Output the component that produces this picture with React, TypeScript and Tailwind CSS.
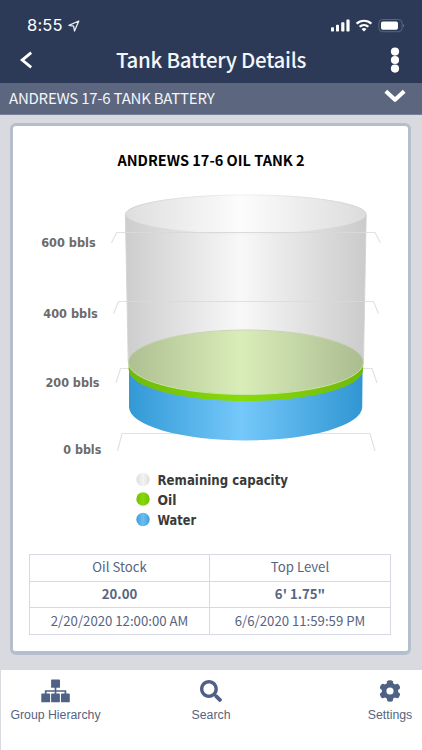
import React from 'react'
import { FaSearch } from 'react-icons/fa'

interface AxisLevel {
  label: string
  textX: number
  textWidth: number
  baseline: number
  points: string
}

const axisLevels: AxisLevel[] = [
  { label: '600 bbls', textX: 41.2, textWidth: 54.5, baseline: 246.7, points: '111.5,243 116.5,232.5 375,232.5 380.5,243' },
  { label: '400 bbls', textX: 43.3, textWidth: 54.5, baseline: 318, points: '113.5,313.5 118.5,301.5 373.5,301.5 378.5,313.5' },
  { label: '200 bbls', textX: 45.5, textWidth: 54, baseline: 387.2, points: '116,383 120.5,368.5 372,368.5 377,383' },
  { label: '0 bbls', textX: 63.3, textWidth: 38, baseline: 454, points: '117.5,451 122,433.5 370,433.5 375,451' }
]

const legendItems = [
  { label: 'Remaining capacity', fill: 'url(#legendGray)', y: 479.5, width: 130.5 },
  { label: 'Oil', fill: 'url(#legendOil)', y: 499, width: 19 },
  { label: 'Water', fill: 'url(#legendWater)', y: 519.5, width: 38.5 }
]

const readings = [
  { left: 'Oil Stock', right: 'Top Level', bold: false },
  { left: '20.00', right: '6\' 1.75"', bold: true },
  { left: '2/20/2020 12:00:00 AM', right: '6/6/2020 11:59:59 PM', bold: false }
]

const gearTeeth = [0, 60, 120, 180, 240, 300]

function StatusBar() {
  return (
    <div className="flex h-[38px] items-end justify-between pl-[27px] pr-[17px] pb-[2px]">
      <div className="flex items-center gap-[5px]">
        <span className="mb-[1px] font-[Inter,sans-serif] text-[16.5px] leading-[20px] tracking-[0.2px] text-white">8:55</span>
        <svg width="12" height="12" viewBox="0 0 12 12" fill="none" stroke="#e8ecf4" strokeWidth="1.3" strokeLinejoin="round">
          <path d="M10.8 1 L0.9 5.3 L5.6 6.1 L6.5 11 Z" />
        </svg>
      </div>
      <svg className="mb-[3px]" width="75" height="16" viewBox="0 0 75 16" fill="#fff">
        <rect x="1" y="10.2" width="3" height="4.3" rx="0.8" />
        <rect x="6" y="7.8" width="3" height="6.7" rx="0.8" />
        <rect x="11.2" y="5.2" width="3.2" height="9.3" rx="0.8" />
        <rect x="16.4" y="2.6" width="3.2" height="11.9" rx="0.8" />
        <g fill="none" stroke="#fff" strokeWidth="2.2">
          <path d="M26.6 6.6 A11 11 0 0 1 41.4 6.6" />
          <path d="M29.6 9.7 A6.6 6.6 0 0 1 38.4 9.7" />
        </g>
        <path d="M31.5 12 Q34 9.9 36.5 12 L34 14.6 Z" />
        <rect x="48.9" y="2.5" width="23.2" height="12.2" rx="3.6" fill="none" stroke="#5f6a80" strokeWidth="0.9" />
        <rect x="51" y="4.4" width="17" height="8.4" rx="1.8" />
        <path d="M73.4 7 Q75 8.6 73.4 10.2 Z" fill="#8e96a8" />
      </svg>
    </div>
  )
}

function Header() {
  return (
    <header className="h-[83px] bg-[#2c3a57]">
      <StatusBar />
      <div className="flex h-[45px] items-center justify-between pl-[19px] pr-[22px]">
        <svg width="14" height="18" viewBox="0 0 14 18" fill="none" stroke="#fff" strokeWidth="2.8" className="mb-[2px]">
          <path d="M12.2 1.6 L3.2 9.1 L12.2 16.4" />
        </svg>
        <h1 className="mb-[4px] mr-[1px] whitespace-nowrap text-[20.5px] leading-[28px] font-medium tracking-[-0.27px] text-[#f3f6fb]">
          Tank Battery Details
        </h1>
        <svg width="10" height="26" viewBox="0 0 10 26" fill="#fff" className="mb-[2px]">
          <circle cx="5" cy="4.6" r="4.1" />
          <circle cx="5" cy="13" r="4.1" />
          <circle cx="5" cy="21.6" r="4.1" />
        </svg>
      </div>
    </header>
  )
}

function TankChart() {
  return (
    <svg width="395" height="360" viewBox="13 180 395 360" className="block">
      <defs>
        <linearGradient id="wall">
          <stop offset="0" stopColor="#cdcdcd" />
          <stop offset="0.48" stopColor="#f8f8f8" />
          <stop offset="1" stopColor="#cbcbcb" />
        </linearGradient>
        <linearGradient id="lid">
          <stop offset="0" stopColor="#dedede" />
          <stop offset="0.48" stopColor="#fcfcfc" />
          <stop offset="1" stopColor="#dcdcdc" />
        </linearGradient>
        <linearGradient id="lidEdge">
          <stop offset="0" stopColor="#cccccc" />
          <stop offset="0.48" stopColor="#efefef" />
          <stop offset="1" stopColor="#cccccc" />
        </linearGradient>
        <linearGradient id="oilTop">
          <stop offset="0" stopColor="#aebf91" />
          <stop offset="0.48" stopColor="#d9edb9" />
          <stop offset="1" stopColor="#abbc90" />
        </linearGradient>
        <linearGradient id="oilSide">
          <stop offset="0" stopColor="#70b80c" />
          <stop offset="0.48" stopColor="#88dc08" />
          <stop offset="1" stopColor="#70b80c" />
        </linearGradient>
        <linearGradient id="waterSide">
          <stop offset="0" stopColor="#3299d5" />
          <stop offset="0.48" stopColor="#75c8fa" />
          <stop offset="1" stopColor="#3096d2" />
        </linearGradient>
        <linearGradient id="legendGray">
          <stop offset="0" stopColor="#dedede" />
          <stop offset="0.5" stopColor="#f4f4f4" />
          <stop offset="1" stopColor="#dedede" />
        </linearGradient>
        <linearGradient id="legendOil">
          <stop offset="0" stopColor="#74c004" />
          <stop offset="0.5" stopColor="#87d80a" />
          <stop offset="1" stopColor="#74c004" />
        </linearGradient>
        <linearGradient id="legendWater">
          <stop offset="0" stopColor="#409fdb" />
          <stop offset="0.5" stopColor="#6ebdf0" />
          <stop offset="1" stopColor="#409fdb" />
        </linearGradient>
      </defs>

      {/* Axis */}
      {axisLevels.map((level) => (
        <g key={level.label}>
          <polyline points={level.points} fill="none" stroke="#e2e2e2" strokeWidth="1.2" />
          <text
            x={level.textX}
            y={level.baseline}
            textLength={level.textWidth}
            lengthAdjust="spacingAndGlyphs"
            className="font-['DejaVu_Sans',sans-serif] text-[13px] font-bold"
            fill="#6b6b6b"
          >
            {level.label}
          </text>
        </g>
      ))}

      {/* Water, then oil, then the empty part of the tank */}
      <path d="M129 368 L129 407 A116.6 33.5 0 0 0 362.2 407 L362.6 368 Z" fill="url(#waterSide)" />
      <path d="M128.4 362 L128.7 370 A117 31 0 0 0 363 370 L363.4 362 Z" fill="url(#oilSide)" />
      <path d="M125.3 215 L128.4 364 L363.4 364 L366.2 215 Z" fill="url(#wall)" />
      <ellipse cx="245.9" cy="362.3" rx="117.5" ry="32" fill="url(#oilTop)" />
      <path d="M128.4 362 A117.5 32 0 0 1 363.4 362" fill="none" stroke="#c3d0ae" strokeWidth="0.9" />
      <path d="M128.4 362.5 A117.5 32 0 0 0 363.4 362.5" fill="none" stroke="#d3e4ba" strokeWidth="0.9" />
      <ellipse cx="245.8" cy="214.5" rx="120.4" ry="19.6" fill="url(#lid)" stroke="url(#lidEdge)" strokeWidth="0.9" />
      <path d="M125.4 215 L128.2 362 M366.2 215 L363.5 362" stroke="#d2d2d2" strokeWidth="0.9" />
      <path d="M126 232.5 H366" stroke="#d9d9d9" strokeWidth="1" />
      <path d="M127 301.5 H364.5" stroke="#d9d9d9" strokeWidth="0.8" />

      {/* Legend */}
      {legendItems.map((item) => (
        <g key={item.label}>
          <circle cx="143" cy={item.y} r="6.7" fill={item.fill} />
          <text
            x="157.5"
            y={item.y + 5.8}
            textLength={item.width}
            lengthAdjust="spacingAndGlyphs"
            className="font-['DejaVu_Sans',sans-serif] text-[13.2px] font-bold"
            fill="#3a3a3a"
          >
            {item.label}
          </text>
        </g>
      ))}
    </svg>
  )
}

function ReadingsTable() {
  return (
    <table className="ml-[16px] mt-[14px] w-[362px] table-fixed border-collapse text-center text-[13.2px] text-[#56647f]">
      <colgroup>
        <col className="w-[180px]" />
        <col />
      </colgroup>
      <tbody>
        {readings.map((row) => (
          <tr key={row.left} className={row.bold ? 'font-bold' : 'font-normal'}>
            <td className="h-[26.7px] border border-[#d5d9e4] p-0 pb-[1px] leading-[20px] whitespace-nowrap">{row.left}</td>
            <td className="h-[26.7px] border border-[#d5d9e4] p-0 pb-[1px] leading-[20px] whitespace-nowrap">{row.right}</td>
          </tr>
        ))}
      </tbody>
    </table>
  )
}

function HierarchyIcon() {
  return (
    <svg width="29" height="24" viewBox="0 0 29 24" fill="#4f6285">
      <rect x="10.1" y="0.4" width="8.9" height="8.4" rx="0.9" />
      <path d="M14.5 8 V16 M4.7 16 V12 H24.4 V16" fill="none" stroke="#4f6285" strokeWidth="1.7" />
      <rect x="0.3" y="14.6" width="8.8" height="8.7" rx="0.9" />
      <rect x="10.1" y="14.6" width="8.8" height="8.7" rx="0.9" />
      <rect x="20" y="14.6" width="8.8" height="8.7" rx="0.9" />
    </svg>
  )
}

function GearIcon() {
  return (
    <svg width="24" height="24" viewBox="-12 -12 24 24" fill="#4f6285">
      <circle r="5.9" fill="none" stroke="#4f6285" strokeWidth="4.6" />
      {gearTeeth.map((angle) => (
        <path key={angle} transform={`rotate(${angle})`} d="M-3.4 -6 L-2.8 -9.8 Q-2.5 -10.8 0 -10.8 Q2.5 -10.8 2.8 -9.8 L3.4 -6 Z" />
      ))}
    </svg>
  )
}

function TabBar() {
  return (
    <nav className="ml-px grid h-[80px] grid-cols-[91px_1fr_44px] bg-white pl-[9px] pr-[10px] pt-[9px] font-['Liberation_Sans',sans-serif] text-[12.3px] leading-[16px] text-[#56647f]">
      <div className="flex flex-col items-center gap-[4px] whitespace-nowrap">
        <HierarchyIcon />
        Group Hierarchy
      </div>
      <div className="mr-[47px] flex flex-col items-center gap-[4px]">
        <FaSearch className="h-[24px] w-[22px] text-[#4f6285]" />
        Search
      </div>
      <div className="flex flex-col items-center gap-[4px]">
        <GearIcon />
        Settings
      </div>
    </nav>
  )
}

export default function App() {
  return (
    <div className="flex h-[750px] w-[422px] flex-col overflow-hidden bg-[#d8dae0] font-['Noto_Sans_CJK_SC',sans-serif]">
      <Header />

      {/* Battery selector */}
      <div className="flex h-[32px] items-center justify-between border-b border-[#75809a] bg-[#5c667f] pl-[9px] pr-[16px]">
        <span className="mb-[2px] text-[15px] leading-[20px] tracking-[-0.23px] whitespace-nowrap text-[#f3f5f9]">
          ANDREWS 17-6 TANK BATTERY
        </span>
        <svg width="22" height="15" viewBox="0 0 22 15" fill="none" stroke="#fff" strokeWidth="4" strokeLinejoin="round" className="mb-[4px]">
          <path d="M1.8 2.2 L11 10.8 L20.2 2.2" />
        </svg>
      </div>

      <main className="h-[555px] pl-[10px] pr-[11px] pt-[8px]">
        <section className="h-[532px] rounded-[6px] border-[3px] border-b-[4px] border-[#b5becd] bg-white">
          <h2 className="h-[54px] pl-[1px] pt-[23px] text-center text-[14.5px] leading-[22px] font-bold text-black">
            ANDREWS 17-6 OIL TANK 2
          </h2>
          <TankChart />
          <ReadingsTable />
        </section>
      </main>

      <TabBar />
    </div>
  )
}
